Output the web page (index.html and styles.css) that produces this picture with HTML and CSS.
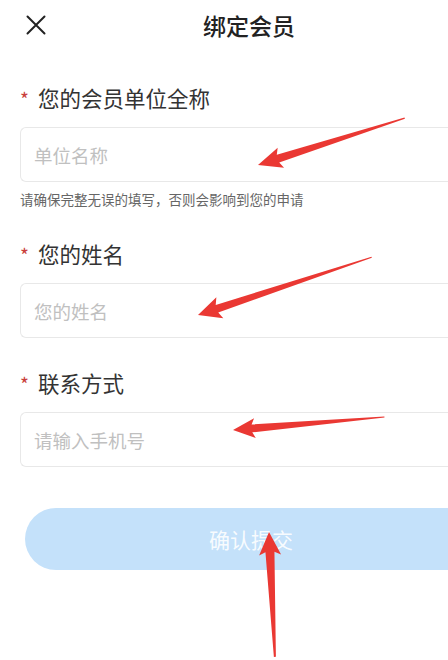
FILE: index.html
```html
<!DOCTYPE html>
<html lang="zh-CN">
<head>
<meta charset="utf-8">
<title>绑定会员</title>
<link rel="stylesheet" href="styles.css">
</head>
<body>
<div class="page">
  <header class="nav">
    <button class="close" type="button" aria-label="关闭">
      <svg width="20" height="20" viewBox="0 0 20 20"><path d="M1.5 1.5 L18.5 18.5 M18.5 1.5 L1.5 18.5" stroke="#222" stroke-width="2" stroke-linecap="round" fill="none"/></svg>
    </button>
    <h1 class="title">绑定会员</h1>
  </header>

  <form class="form">
    <div class="field">
      <label class="label"><span class="req">*</span>您的会员单位全称</label>
      <input class="input" type="text" placeholder="单位名称">
      <p class="hint">请确保完整无误的填写，否则会影响到您的申请</p>
    </div>
    <div class="field">
      <label class="label"><span class="req">*</span>您的姓名</label>
      <input class="input" type="text" placeholder="您的姓名">
    </div>
    <div class="field">
      <label class="label"><span class="req">*</span>联系方式</label>
      <input class="input" type="tel" placeholder="请输入手机号">
    </div>
    <button class="submit" type="button">确认提交</button>
  </form>

  <svg class="marks" width="448" height="660" viewBox="0 0 448 660">
    <g fill="#ea3833">
      <path transform="translate(258 165) rotate(-17.7)" d="M0 0 L24 -10.5 L21 -4 L154 -0.6 L154 0.6 L21 4 L24 10.5 Z"/>
      <path transform="translate(198 315) rotate(-18.4)" d="M0 0 L23 -11 L20 -4 L183 -0.6 L183 0.6 L20 4 L23 11 Z"/>
      <path transform="translate(233 430) rotate(-4.9)" d="M0 0 L22 -10 L19 -4 L152 -0.6 L152 0.6 L19 4 L22 10 Z"/>
      <path transform="translate(269 532) rotate(87.3)" d="M0 0 L23 -11 L20 -4.5 L125 -1 L125 1 L20 4.5 L23 11 Z"/>
    </g>
  </svg>
</div>
</body>
</html>
```

FILE: styles.css
```css
html, body {
  margin: 0;
  padding: 0;
  background: #fff;
}

body {
  width: 448px;
  height: 660px;
  overflow: hidden;
  font-family: "Noto Sans CJK SC", "Noto Sans", sans-serif;
}

.page {
  position: relative;
  width: 448px;
  height: 660px;
  overflow: hidden;
}

/* the view is cut at the right edge: the title sits at the centre of the wider screen */
.nav {
  height: 50px;
  display: grid;
  grid-template-columns: 1fr auto 1fr;
  align-items: center;
  padding-left: 50px;
}

.close {
  grid-column: 1;
  grid-row: 1;
  justify-self: start;
  margin-left: -24px;
  padding: 0;
  border: 0;
  background: none;
  width: 20px;
  height: 20px;
  display: flex;
}

.title {
  grid-column: 2;
  grid-row: 1;
  margin: 0;
  font-size: 23px;
  font-weight: 500;
  color: #222;
  line-height: 30px;
}

.form {
  padding: 33px 0 0 20px;
  display: flex;
  flex-direction: column;
}

.field {
  display: flex;
  flex-direction: column;
}

.field + .field {
  margin-top: 30px;
}

.label {
  display: flex;
  align-items: center;
  font-size: 21.5px;
  line-height: 30px;
  color: #333;
  margin-bottom: 14px;
}

.req {
  color: #c9403a;
  font-size: 19px;
  width: 12px;
  margin-right: 6px;
  position: relative;
  top: 1px;
}

.input {
  box-sizing: border-box;
  height: 55px;
  border: 1px solid #e8e8e8;
  border-right: 0;
  border-radius: 6px 0 0 6px;
  padding: 0 13px;
  font-family: inherit;
  font-size: 18.5px;
  color: #333;
  background: #fff;
  outline: none;
}

.input::placeholder {
  color: #c0c0c0;
}

.hint {
  margin: 7px 0 0;
  font-size: 13.5px;
  line-height: 20px;
  color: #666;
}

.submit {
  margin: 41px 0 0 5px;
  height: 62px;
  border: 0;
  border-radius: 31px 0 0 31px;
  padding: 0 0 0 29px;
  background: #c4e1fa;
  color: rgba(255, 255, 255, 0.9);
  font-family: inherit;
  font-size: 21px;
}

.marks {
  position: absolute;
  left: 0;
  top: 0;
  pointer-events: none;
}
```
